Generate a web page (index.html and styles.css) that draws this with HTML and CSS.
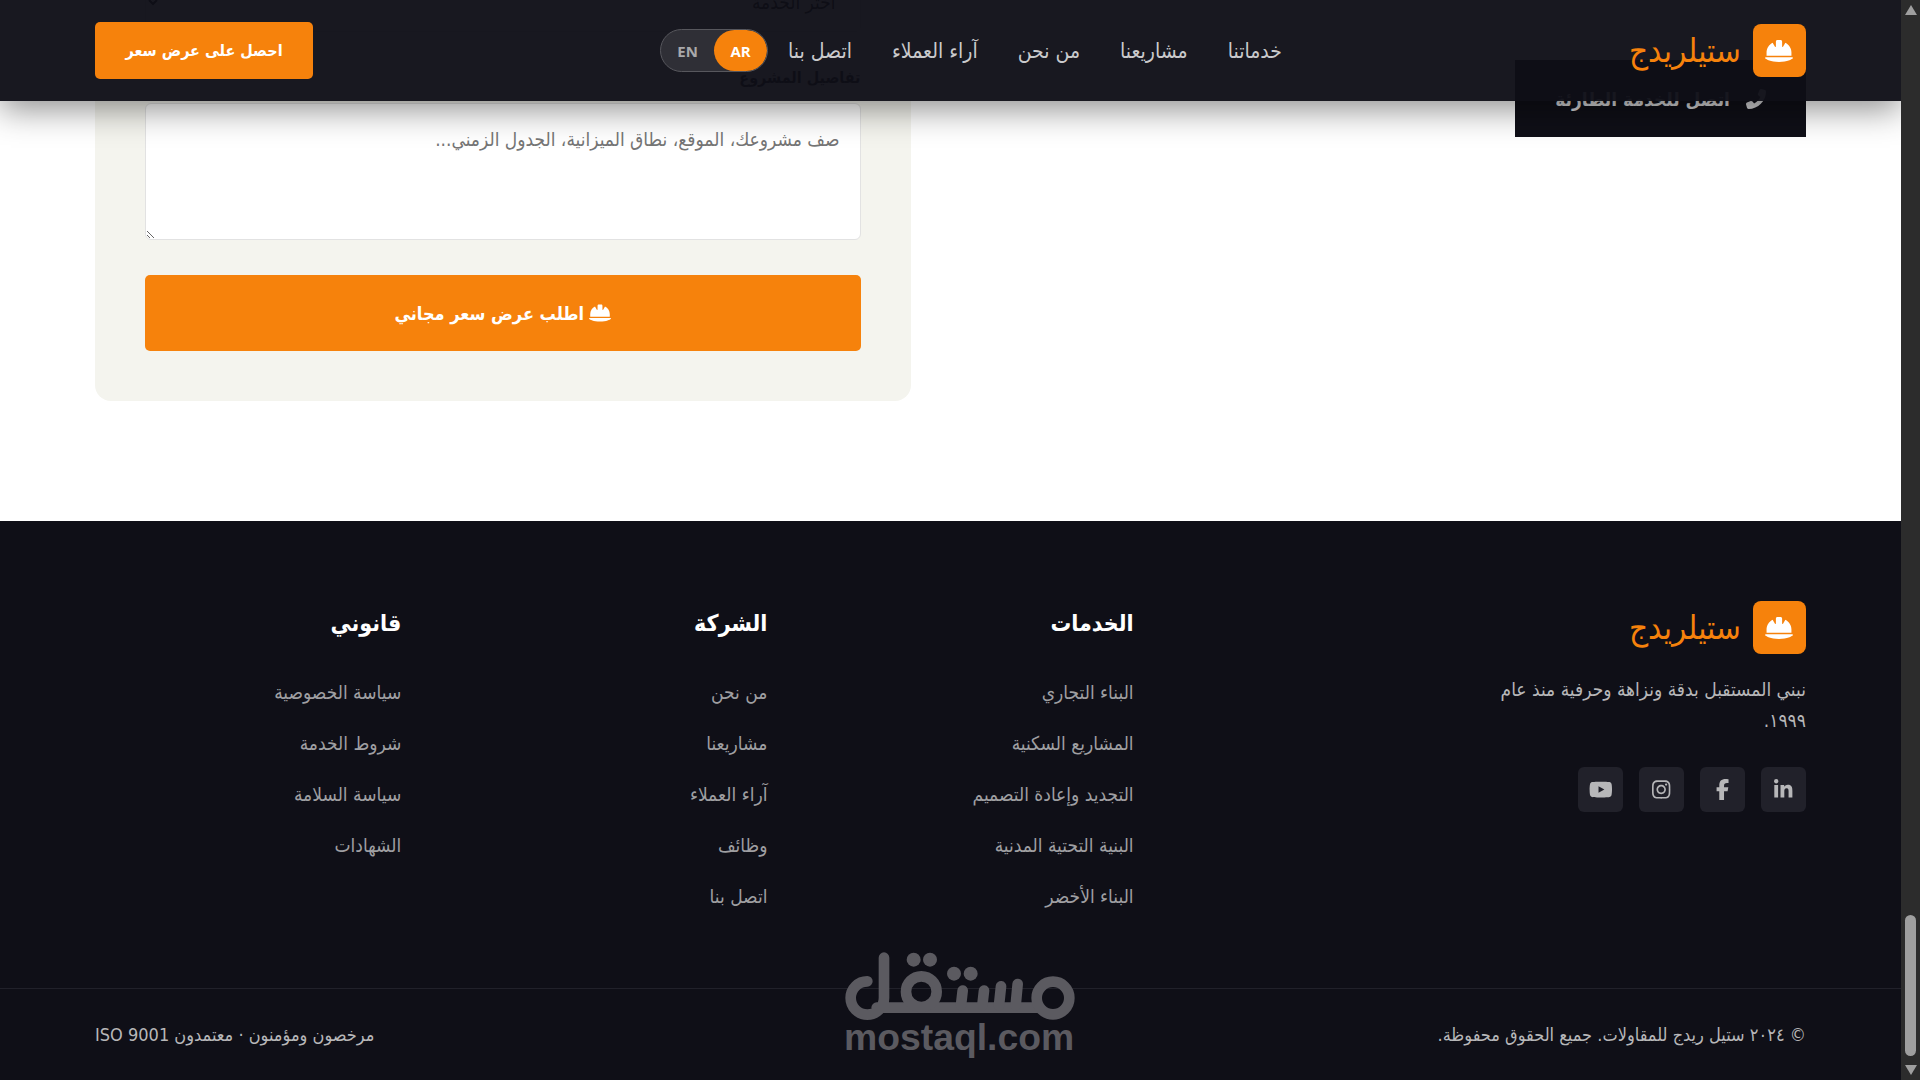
FILE: index.html
```html
<!DOCTYPE html>
<html lang="ar" dir="rtl">
<head>
<meta charset="utf-8">
<meta name="viewport" content="width=device-width, initial-scale=1">
<title>ستيلريدج</title>
<link rel="stylesheet" href="styles.css">
</head>
<body>
<svg class="defs" aria-hidden="true">
  <symbol id="helmet" viewBox="0 0 576 512"><path d="M256 32c-17.7 0-32 14.3-32 32v101.9c0 5.6-4.5 10.1-10.1 10.1c-3.6 0-7-1.9-8.8-5.1L157.1 87C83 123.5 32 199.8 32 288v64H544l0-66.4c-.9-87.2-51.7-162.4-125.1-198.6l-48 83.9c-1.8 3.2-5.2 5.1-8.8 5.1c-5.6 0-10.1-4.5-10.1-10.1V64c0-17.7-14.3-32-32-32H256zM16.6 384C7.4 384 0 391.4 0 400.6c0 4.7 2 9.2 5.8 11.9C27.5 428.4 111.8 480 288 480s260.5-51.6 282.2-67.5c3.8-2.8 5.8-7.2 5.8-11.9c0-9.2-7.4-16.6-16.6-16.6H16.6z"/></symbol>
</svg>

<div class="page">
  <header class="header">
    <a class="logo" href="#"><span class="logo-icon"><svg><use href="#helmet"/></svg></span><span>ستيلريدج</span></a>
    <nav class="nav">
      <a href="#">خدماتنا</a>
      <a href="#">مشاريعنا</a>
      <a href="#">من نحن</a>
      <a href="#">آراء العملاء</a>
      <a href="#">اتصل بنا</a>
      <div class="lang"><button class="active" type="button">AR</button><button type="button">EN</button></div>
    </nav>
    <button class="cta" type="button">احصل على عرض سعر</button>
  </header>

  <main class="contact">
    <div class="info">
      <a class="emergency" href="#"><svg viewBox="0 0 512 512"><path transform="translate(512 0) scale(-1 1)" d="M164.9 24.6c-7.7-18.6-28-28.5-47.4-23.2l-88 24C12.1 30.2 0 46 0 64C0 311.4 200.6 512 448 512c18 0 33.8-12.1 38.6-29.5l24-88c5.3-19.4-4.6-39.7-23.2-47.4l-96-40c-16.3-6.8-35.2-2.1-46.3 11.6L304.7 368C234.3 334.7 177.3 277.7 144 207.3L193.3 167c13.7-11.2 18.4-30 11.6-46.3l-40-96z"/></svg><span>اتصل للخدمة الطارئة</span></a>
    </div>
    <form class="card">
      <select aria-label="الخدمة"><option>اختر الخدمة</option></select>
      <label for="details">تفاصيل المشروع</label>
      <textarea id="details" placeholder="صف مشروعك، الموقع، نطاق الميزانية، الجدول الزمني..."></textarea>
      <button class="submit" type="button"><svg><use href="#helmet"/></svg><span>اطلب عرض سعر مجاني</span></button>
    </form>
  </main>

  <footer class="footer">
    <div class="columns">
      <div class="brand">
        <a class="logo" href="#"><span class="logo-icon"><svg><use href="#helmet"/></svg></span><span>ستيلريدج</span></a>
        <p>نبني المستقبل بدقة ونزاهة وحرفية منذ عام ١٩٩٩.</p>
        <div class="social">
          <a href="#" aria-label="LinkedIn"><svg viewBox="0 0 448 512"><path d="M100.28 448H7.4V148.9h92.88zM53.79 108.1C24.09 108.1 0 83.5 0 53.8a53.79 53.79 0 0 1 107.58 0c0 29.7-24.1 54.3-53.79 54.3zM447.9 448h-92.68V302.4c0-34.7-.7-79.2-48.29-79.2-48.29 0-55.69 37.7-55.69 76.7V448h-92.78V148.9h89.08v40.8h1.3c12.4-23.5 42.69-48.3 87.88-48.3 94 0 111.28 61.9 111.28 142.3V448z"/></svg></a>
          <a href="#" aria-label="Facebook"><svg viewBox="0 0 320 512"><path d="M80 299.3V512H196V299.3h86.5l18-97.8H196V166.9c0-51.7 20.3-71.5 72.7-71.5c16.3 0 29.4 .4 37 1.2V7.9C291.4 4 256.4 0 236.2 0C129.3 0 80 50.5 80 159.4v42.1H14v97.8H80z"/></svg></a>
          <a href="#" aria-label="Instagram"><svg viewBox="0 0 448 512"><path d="M224.1 141c-63.6 0-114.9 51.3-114.9 114.9s51.3 114.9 114.9 114.9S339 319.5 339 255.9 287.7 141 224.1 141zm0 189.6c-41.1 0-74.7-33.5-74.7-74.7s33.5-74.7 74.7-74.7 74.7 33.5 74.7 74.7-33.6 74.7-74.7 74.7zm146.4-194.3c0 14.9-12 26.8-26.8 26.8-14.9 0-26.8-12-26.8-26.8s12-26.8 26.8-26.8 26.8 12 26.8 26.8zm76.1 27.2c-1.7-35.9-9.9-67.7-36.2-93.9-26.2-26.2-58-34.4-93.9-36.2-37-2.1-147.9-2.1-184.9 0-35.8 1.7-67.6 9.9-93.9 36.1s-34.4 58-36.2 93.9c-2.1 37-2.1 147.9 0 184.9 1.7 35.9 9.9 67.7 36.2 93.9s58 34.4 93.9 36.2c37 2.1 147.9 2.1 184.9 0 35.9-1.7 67.7-9.9 93.9-36.2 26.2-26.2 34.4-58 36.2-93.9 2.1-37 2.1-147.8 0-184.8zM398.8 388c-7.8 19.6-22.9 34.7-42.6 42.6-29.5 11.7-99.5 9-132.1 9s-102.7 2.6-132.1-9c-19.6-7.8-34.7-22.9-42.6-42.6-11.7-29.5-9-99.5-9-132.1s-2.6-102.7 9-132.1c7.8-19.6 22.9-34.7 42.6-42.6 29.5-11.7 99.5-9 132.1-9s102.7-2.6 132.1 9c19.6 7.8 34.7 22.9 42.6 42.6 11.7 29.5 9 99.5 9 132.1s2.7 102.7-9 132.1z"/></svg></a>
          <a href="#" aria-label="YouTube"><svg viewBox="0 0 576 512"><path d="M549.655 124.083c-6.281-23.65-24.787-42.276-48.284-48.597C458.781 64 288 64 288 64S117.22 64 74.629 75.486c-23.497 6.322-42.003 24.947-48.284 48.597-11.412 42.867-11.412 132.305-11.412 132.305s0 89.438 11.412 132.305c6.281 23.65 24.787 41.5 48.284 47.821C117.22 448 288 448 288 448s170.78 0 213.371-11.486c23.497-6.321 42.003-24.171 48.284-47.821 11.412-42.867 11.412-132.305 11.412-132.305s0-89.438-11.412-132.305zm-317.51 213.508V175.185l142.739 81.205-142.739 81.201z"/></svg></a>
        </div>
      </div>
      <div class="links">
        <h4>الخدمات</h4>
        <ul>
          <li><a href="#">البناء التجاري</a></li>
          <li><a href="#">المشاريع السكنية</a></li>
          <li><a href="#">التجديد وإعادة التصميم</a></li>
          <li><a href="#">البنية التحتية المدنية</a></li>
          <li><a href="#">البناء الأخضر</a></li>
        </ul>
      </div>
      <div class="links">
        <h4>الشركة</h4>
        <ul>
          <li><a href="#">من نحن</a></li>
          <li><a href="#">مشاريعنا</a></li>
          <li><a href="#">آراء العملاء</a></li>
          <li><a href="#">وظائف</a></li>
          <li><a href="#">اتصل بنا</a></li>
        </ul>
      </div>
      <div class="links">
        <h4>قانوني</h4>
        <ul>
          <li><a href="#">سياسة الخصوصية</a></li>
          <li><a href="#">شروط الخدمة</a></li>
          <li><a href="#">سياسة السلامة</a></li>
          <li><a href="#">الشهادات</a></li>
        </ul>
      </div>
    </div>
    <div class="bottom">
      <span>© ٢٠٢٤ ستيل ريدج للمقاولات. جميع الحقوق محفوظة.</span>
      <span>مرخصون ومؤمنون · معتمدون ISO 9001</span>
    </div>
  </footer>
</div>

<div class="scrollbar" aria-hidden="true">
  <svg viewBox="0 0 14 11"><path d="M7 0 13 10H1Z"/></svg>
  <div class="thumb"></div>
  <svg viewBox="0 0 14 11"><path d="M7 11 1 1H13Z"/></svg>
</div>

<svg class="watermark" viewBox="75 65 690 324" direction="ltr">
  <g class="mark">
    <path d="M192 82V203A50 50 0 1 1 142 153M170 232H655"/>
    <circle cx="699" cy="203" r="49"/>
    <circle cx="304" cy="184" r="46"/>
    <path d="M593 161 587 225M543 168 537 225M492 181 487 225M428 181 423 225"/>
  </g>
  <circle cx="281" cy="88" r="21"/><circle cx="330" cy="88" r="21"/>
  <circle cx="402" cy="130" r="21"/><circle cx="452" cy="130" r="21"/>
  <text x="72" y="360">mostaql.com</text>
</svg>
</body>
</html>
```
FILE: styles.css
```css
* { box-sizing: border-box; margin: 0; padding: 0; }

body {
  display: flex;
  flex-direction: row-reverse;
  height: 100vh;
  overflow: hidden;
  background: #fff;
  font-family: "DejaVu Sans Condensed", "DejaVu Sans", sans-serif;
  font-size: 19px;
  color: #0f0f17;
}

a { color: inherit; text-decoration: none; }
button { border: 0; font: inherit; cursor: pointer; }
svg { fill: currentColor; }
.defs { position: absolute; width: 0; height: 0; }

.page {
  position: relative;
  flex: 1;
  display: flex;
  flex-direction: column;
  justify-content: flex-end;
  overflow: hidden;
}

.header {
  position: absolute;
  inset: 0 0 auto;
  z-index: 2;
  display: flex;
  align-items: center;
  justify-content: space-between;
  height: 101px;
  padding: 0 5%;
  background: rgba(15, 15, 23, .96);
  box-shadow: 0 8px 32px rgba(0, 0, 0, .45);
}

.logo {
  display: flex;
  align-items: center;
  gap: 12px;
  height: 53px;
  font-size: 33px;
  color: #f6820c;
}
.logo-icon {
  display: grid;
  place-items: center;
  width: 53px;
  height: 53px;
  border-radius: 8px;
  background: #f6820c;
  color: #fff;
}
.logo-icon svg { width: 28px; height: 26px; }

.nav { display: flex; align-items: center; gap: 40px; font-size: 21px; color: #cacacc; }
.lang {
  display: flex;
  margin-inline-start: -20px;
  border: 1px solid #57575d;
  border-radius: 22px;
  background: #2f2f36;
  overflow: hidden;
}
.lang button {
  width: 53px;
  height: 41px;
  border-radius: 21px;
  background: none;
  font: bold 15px "Open Sans", sans-serif;
  color: #a9a9ab;
}
.lang .active { background: #f6820c; color: #fff; }

.cta {
  width: 218px;
  height: 57px;
  border-radius: 5px;
  background: #f6820c;
  font-size: 16px;
  font-weight: bold;
  color: #fff;
}

.contact {
  display: grid;
  grid-template-columns: 1fr 1fr;
  gap: 80px;
  padding: 0 5% 120px;
}
.info { align-self: end; padding-bottom: 264px; }
.emergency {
  display: inline-flex;
  align-items: center;
  gap: 16px;
  height: 77px;
  padding: 0 40px;
  background: #0f0f17;
  font-weight: bold;
  color: #d4d4d6;
  vertical-align: bottom;
}
.emergency svg { width: 20px; height: 20px; }

.card {
  display: flex;
  flex-direction: column;
  padding: 50px;
  border-radius: 16px;
  background: #f4f4ee;
}
.card select {
  height: 60px;
  padding: 0 20px;
  border: 1px solid #e2e2e2;
  border-radius: 6px;
  background: #fff;
  font: inherit;
}
.card label { margin: 31px 0 10px; line-height: 30px; font-size: 16px; font-weight: bold; }
.card textarea {
  height: 137px;
  padding: 20px;
  border: 1px solid #e2e2e2;
  border-radius: 6px;
  font: inherit;
  line-height: 30px;
  resize: vertical;
}
.card textarea::placeholder { color: #757575; }
.submit {
  display: flex;
  align-items: center;
  justify-content: center;
  gap: 5px;
  height: 76px;
  margin-top: 35px;
  border-radius: 5px;
  background: #f6820c;
  font-size: 18px;
  font-weight: bold;
  color: #fff;
}
.submit svg { width: 22px; height: 20px; }

.footer { background: #0f0f17; color: #b7b7b9; }
.columns {
  display: grid;
  grid-template-columns: 2fr 1fr 1fr 1fr;
  gap: 60px;
  padding: 80px 5% 76px;
}
.brand p { max-width: 330px; margin: 20px 0 31px; line-height: 31px; }
.social { display: flex; gap: 16px; }
.social a {
  display: grid;
  place-items: center;
  width: 45px;
  height: 45px;
  border-radius: 6px;
  background: #21212a;
}
.social svg { height: 21px; }

.links h4 { margin-bottom: 32px; line-height: 44px; font-size: 23px; color: #fff; }
.links ul { display: grid; gap: 20px; list-style: none; }
.links li { line-height: 31px; color: #9f9fa2; }

.bottom {
  display: flex;
  justify-content: space-between;
  padding: 30px 5%;
  border-top: 1px solid #21212a;
  line-height: 31px;
  font-size: 18px;
}

.scrollbar {
  z-index: 3;
  display: flex;
  flex-direction: column;
  align-items: center;
  gap: 8px;
  width: 19px;
  padding: 5px 0;
  background: #2c2c2c;
  color: #9f9f9f;
}
.scrollbar svg { width: 14px; height: 11px; }
.thumb {
  width: 11px;
  height: 141px;
  margin-top: auto;
  border-radius: 6px;
  background: #9f9f9f;
}

.watermark {
  position: absolute;
  left: 44%;
  bottom: 20px;
  z-index: 4;
  width: 230px;
  height: 108px;
  fill: #5b5a60;
}
.mark { fill: none; stroke: #5b5a60; stroke-width: 32; stroke-linecap: round; }
.watermark text { font: bold 112px "Liberation Sans", sans-serif; direction: ltr; }
```
